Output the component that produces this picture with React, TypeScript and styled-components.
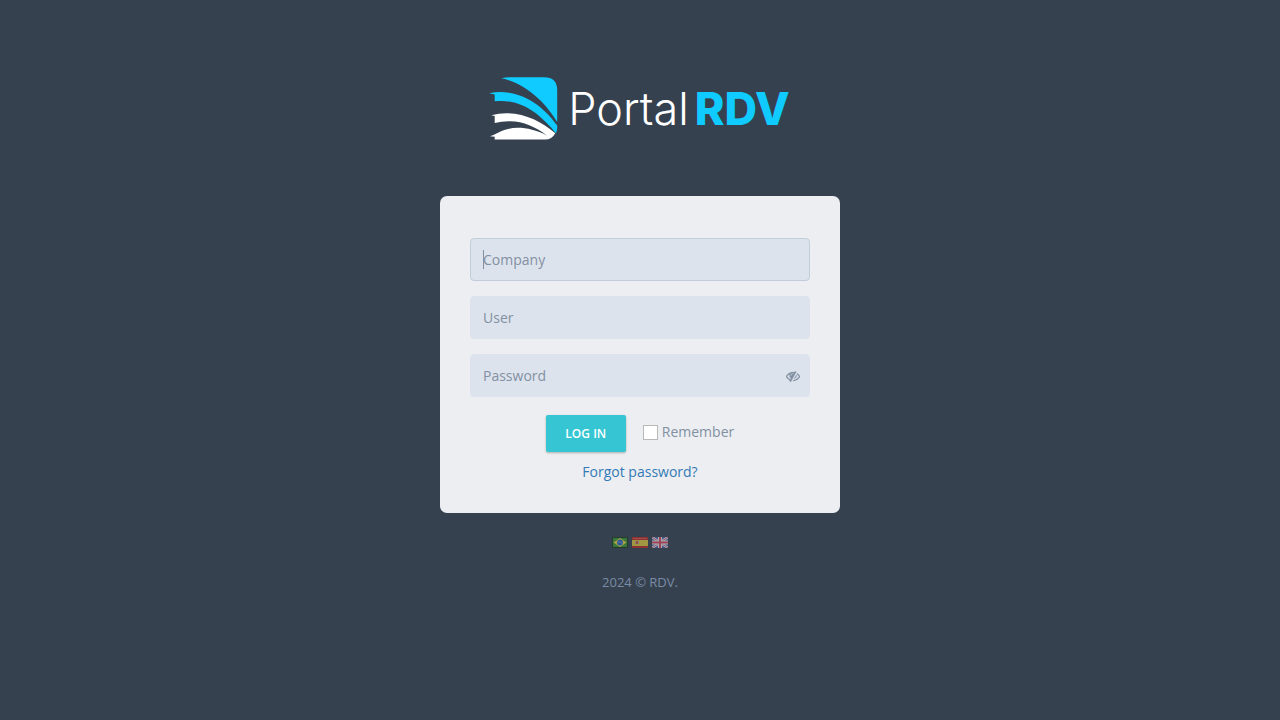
import React from "react";
import styled, { createGlobalStyle } from "styled-components";

const GlobalStyle = createGlobalStyle`
  *, *::before, *::after { box-sizing: border-box; }
  body {
    margin: 0;
    background: #364150;
    color: #8290a3;
    font: 400 14px/20px "Open Sans", "Liberation Sans", sans-serif;
  }
`;

const Page = styled.div`
  display: flex;
  flex-direction: column;
  align-items: center;
  min-height: 100vh;
  padding: 76px 16px 16px;
`;

const Brand = styled.a`
  display: flex;
  align-items: center;
  gap: 10px;
  height: 64px;
  text-decoration: none;
`;

const BrandMark = styled.svg`
  display: block;
  width: 68px;
  height: 64px;
  overflow: visible;
`;

const BrandName = styled.span`
  display: flex;
  gap: 6px;
  padding-top: 2px;
  color: #fff;
  font-family: Inter, "Open Sans", sans-serif;
  font-size: 45px;
  font-weight: 350;
  line-height: 60px;
`;

const BrandStrong = styled.strong`
  color: #0fcbff;
  font-weight: 850;
`;

const Card = styled.form`
  width: 100%;
  max-width: 400px;
  margin-top: 56px;
  padding: 42px 30px 31px;
  border-radius: 7px;
  background: #eceef1;
`;

const Field = styled.div`
  position: relative;
  margin-bottom: 15px;
`;

const TextInput = styled.input<{ $active?: boolean }>`
  display: block;
  width: 100%;
  height: 43px;
  padding: 6px 12px;
  border: 1px solid ${(p) => (p.$active ? "#c3ccda" : "#dde3ec")};
  border-radius: 4px;
  outline: none;
  background: #dde3ec;
  color: #8290a3;
  caret-color: transparent;
  font: inherit;

  &::placeholder {
    color: #8290a3;
    opacity: 1;
  }
`;

const Caret = styled.span`
  position: absolute;
  top: 12px;
  left: 13px;
  width: 1px;
  height: 19px;
  background: #8290a3;
`;

const RevealButton = styled.button`
  position: absolute;
  top: 15px;
  right: 10px;
  display: flex;
  width: 14px;
  height: 14px;
  padding: 0;
  border: 0;
  background: none;
  color: #8290a3;
  cursor: pointer;
`;

const Actions = styled.div`
  display: flex;
  justify-content: center;
  align-items: center;
  gap: 17px;
  margin-top: 18px;
`;

const LoginButton = styled.button`
  min-width: 80px;
  height: 37px;
  padding: 0 19px;
  border: 0;
  border-radius: 2px;
  background: #36c6d3;
  box-shadow: 0 1px 3px rgba(0, 0, 0, 0.1), 0 1px 2px rgba(0, 0, 0, 0.18);
  color: #fff;
  font: 600 12px/18px "Open Sans", "Liberation Sans", sans-serif;
  text-transform: uppercase;
  cursor: pointer;
`;

const Remember = styled.label`
  display: flex;
  align-items: center;
  gap: 4px;
  padding-bottom: 4px;
`;

const Checkbox = styled.input`
  appearance: none;
  width: 15px;
  height: 15px;
  margin: 2px 0 0;
  border: 1px solid #b8b8b8;
  background: #fff;

  &:checked {
    background: #36c6d3;
  }
`;

const Forgot = styled.a`
  display: block;
  margin-top: 10px;
  color: #337ab7;
  text-align: center;
  text-decoration: none;
`;

const Languages = styled.nav`
  display: flex;
  gap: 4px;
  margin-top: 24px;
`;

const LanguageLink = styled.a`
  display: block;
  height: 11px;
  opacity: 0.6;

  svg {
    display: block;
  }
`;

const Copyright = styled.footer`
  margin-top: 24px;
  color: #7a8ca5;
  font-size: 13px;
`;

const EyeSlash = () => (
  <svg width="14" height="14" viewBox="0 0 1792 1792" fill="currentColor" stroke="currentColor" strokeWidth="40" aria-hidden="true">
    <path d="M555 1335l78-141q-87-63-136-159t-49-203q0-121 61-225-229 117-381 353 167 258 427 375zm389-759q0-20-14-34t-34-14q-125 0-214.500 89.500t-89.500 214.500q0 20 14 34t34 14 34-14 14-34q0-86 61-147t147-61q20 0 34-14t14-34zm363-191q0 7-1 9-106 189-316 567t-315 566l-49 89q-10 16-28 16-12 0-134-70-16-10-16-28 0-12 44-87-143-65-263.500-173t-208.500-245q-20-31-20-69t20-69q153-235 380-371t496-136q89 0 180 17l54-97q10-16 28-16 5 0 18 6t31 15.500 33 18.500 31.500 18.500 19.500 11.500q16 10 16 27zm37 447q0 139-79 253.500t-209 164.500l280-502q8 45 8 84zm448 128q0 35-20 69-39 64-109 145-150 172-347.500 267t-419.500 95l74-132q212-18 392.500-137t301.500-307q-115-179-282-294l63-112q95 64 182.500 153t144.500 184q20 34 20 69z" />
  </svg>
);

const BrazilFlag = () => (
  <svg width="16" height="11" viewBox="0 0 16 11" aria-hidden="true">
    <rect width="16" height="11" fill="#123d10" />
    <rect x="1" y="1" width="14" height="9" fill="#3f9a2c" />
    <path d="M8 1L14.500 5.500 8 10 1.500 5.500z" fill="#f1e33f" />
    <circle cx="8" cy="5.500" r="2.900" fill="#2b62c8" />
    <path d="M5.600 4.800q3-.4 4.800 1.800" stroke="#9fb8e4" strokeWidth=".7" fill="none" />
  </svg>
);

const SpainFlag = () => (
  <svg width="16" height="11" viewBox="0 0 16 11" aria-hidden="true">
    <rect width="16" height="11" fill="#c4281f" />
    <rect x="1" y="1" width="14" height="1" fill="#e8584c" />
    <rect y="3" width="16" height="6" fill="#e8d03a" />
    <rect x="3" y="4" width="1" height="3" fill="#c9a08a" />
    <rect x="4" y="4" width="2" height="3" fill="#d0603c" />
    <rect x="6" y="4" width="1" height="3" fill="#c9a08a" />
  </svg>
);

const BritainFlag = () => (
  <svg width="16" height="11" viewBox="0 0 16 11" aria-hidden="true">
    <rect width="16" height="11" fill="#4a62ae" />
    <path d="M0 0l16 11M16 0L0 11" stroke="#f3eef2" strokeWidth="2.400" />
    <path d="M0 0l16 11M16 0L0 11" stroke="#d6455a" strokeWidth=".8" />
    <path d="M8 0v11M0 5.500h16" stroke="#f8f2f4" strokeWidth="4" />
    <path d="M8 0v11M0 5.500h16" stroke="#e04458" strokeWidth="2" />
  </svg>
);

export default function App() {
  return (
    <>
      <GlobalStyle />
      <Page>
        <Brand href="#" aria-label="Portal RDV">
          <BrandMark viewBox="0 0 68 64" aria-hidden="true">
            <path fill="#0fcbff" d="M11.500 2.300Q15 1.200 20 1.200H54Q67.200 1.200 67.200 14V46C57 29 38 8 11.500 2.300z" />
            <path fill="#0fcbff" d="M-.7 17.200Q9 15.300 19 16.700C40 20 56 34 67.200 49.500Q67.500 54 66 57.300C51 39 31 22 4.700 25.300V18.500z" />
            <path fill="#fff" d="M1.300 39.200Q9 37.200 17 37.300C36 37.600 52 46 65.300 57.300Q62 63.600 55 63.600H4.700V60.700L0 60.300Q4 59 9 56.300C22 49.500 39 50.500 57 59.500C45 50.500 34 45.500 20 45.200Q12 45 4.700 47V40z" />
          </BrandMark>
          <BrandName>
            Portal<BrandStrong>RDV</BrandStrong>
          </BrandName>
        </Brand>

        <Card onSubmit={(e) => e.preventDefault()}>
          <Field>
            <TextInput $active type="text" placeholder="Company" aria-label="Company" autoComplete="off" />
            <Caret />
          </Field>
          <Field>
            <TextInput type="text" placeholder="User" aria-label="User" autoComplete="off" />
          </Field>
          <Field>
            <TextInput type="password" placeholder="Password" aria-label="Password" autoComplete="off" />
            <RevealButton type="button" aria-label="Show password">
              <EyeSlash />
            </RevealButton>
          </Field>
          <Actions>
            <LoginButton type="submit">Log in</LoginButton>
            <Remember>
              <Checkbox type="checkbox" />
              Remember
            </Remember>
          </Actions>
          <Forgot href="#">Forgot password?</Forgot>
        </Card>

        <Languages aria-label="Language">
          <LanguageLink href="#" aria-label="Português"><BrazilFlag /></LanguageLink>
          <LanguageLink href="#" aria-label="Español"><SpainFlag /></LanguageLink>
          <LanguageLink href="#" aria-label="English"><BritainFlag /></LanguageLink>
        </Languages>
        <Copyright>2024 © RDV.</Copyright>
      </Page>
    </>
  );
}
